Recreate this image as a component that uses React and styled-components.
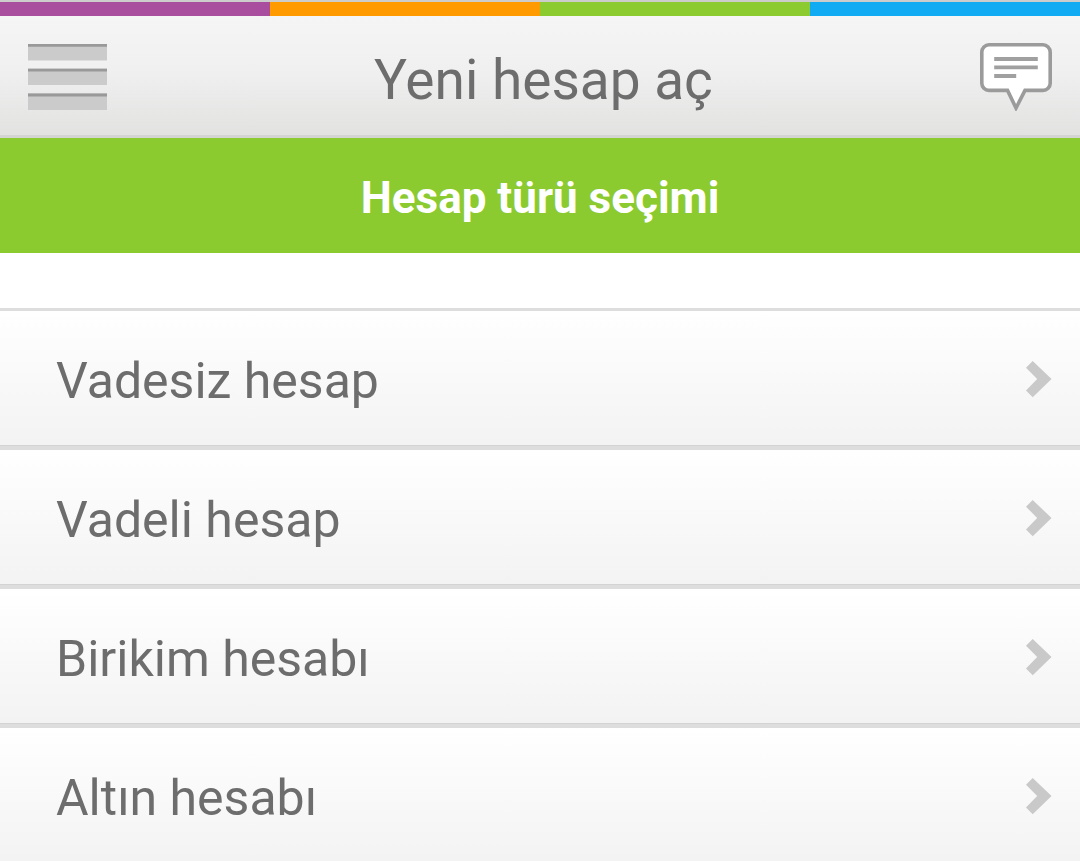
import React from "react"
import styled, { createGlobalStyle } from "styled-components"

const colors = {
  purple: "#a94d9f",
  orange: "#ff9a00",
  green: "#8ccb30",
  blue: "#10abf2",
  text: "#6d6d6d",
  line: "#dddddd",
}

const GlobalStyle = createGlobalStyle`
  body {
    margin: 0;
    background: #ffffff;
    color: ${colors.text};
    font-family: Roboto, "Liberation Sans", sans-serif;
  }
`

const Page = styled.div`
  display: flex;
  flex-direction: column;
`

const Stripes = styled.div`
  display: flex;
  height: 14px;
  border-top: 2px solid #cccccc;
`

const Stripe = styled.span`
  flex: 1;
  background: ${props => props.$color};
`

const Header = styled.header`
  display: flex;
  justify-content: space-between;
  align-items: center;
  height: 117px;
  padding: 2px 28px 0;
  background: linear-gradient(#f5f5f5, #f0f0f0 45%, #e2e2e1);
  border-bottom: 3px solid #d4d4d2;
`

const Title = styled.h1`
  margin: 0;
  padding-top: 6px;
  font-size: 55px;
  line-height: 66px;
  font-weight: 400;
`

const IconButton = styled.button`
  display: flex;
  padding: 0;
  border: 0;
  background: none;
  cursor: pointer;
`

const Banner = styled.h2`
  margin: 0;
  padding: 34px 24px 29px;
  background: ${colors.green};
  color: #ffffff;
  font-size: 44px;
  line-height: 52px;
  font-weight: 700;
  text-align: center;
`

const List = styled.ul`
  list-style: none;
  margin: 55px 0 0;
  padding: 0;
  border-top: 3px solid ${colors.line};
`

const Item = styled.li`
  border-bottom: 4px solid ${colors.line};

  &:last-child {
    border-bottom: 0;
  }
`

const ItemLink = styled.a`
  display: flex;
  justify-content: space-between;
  align-items: center;
  padding: 38px 28px 36px 56px;
  background: linear-gradient(#ffffff, #f3f3f3);
  border-bottom: 1px solid #d3d3d3;
  color: inherit;
  text-decoration: none;

  ${Item}:last-child & {
    border-bottom: 0;
    padding-bottom: 35px;
  }
`

const ItemLabel = styled.span`
  padding-top: 4px;
  font-size: 50px;
  line-height: 56px;
`

const MenuIcon = () => (
  <svg width="79" height="66" viewBox="0 0 79 66" aria-hidden="true">
    <path fill="#cbcbcb" d="M0 0h79v16.4H0zM0 24.6h79v16.4H0zM0 49.2h79V66H0z" />
    <path fill="#999999" d="M0 0h79v2.8H0zM0 24.8h79v2.8H0zM0 49.6h79v2.8H0z" />
  </svg>
)

const MessageIcon = () => (
  <svg width="72" height="68" viewBox="0 0 72 68" fill="none" aria-hidden="true">
    <path
      d="M9 1.8h54a7.2 7.2 0 0 1 7.2 7.2v31.2a7.2 7.2 0 0 1-7.2 7.2H45L36 65l-8.5-17.6H9a7.2 7.2 0 0 1-7.2-7.2V9A7.2 7.2 0 0 1 9 1.8z"
      fill="#ffffff"
      stroke="#9b9b9b"
      strokeWidth="3.6"
    />
    <path
      d="M14.2 16h43.6M14.2 24.3h43.6M14.2 33h22"
      stroke="#a0a0a0"
      strokeWidth="3.8"
    />
  </svg>
)

const Chevron = () => (
  <svg width="27" height="38" viewBox="0 0 27 38" aria-hidden="true">
    <path fill="#c9c9c9" d="M7.7 1L26.5 19 7.7 37.2 1 30.5 12.2 19 1 7.7z" />
  </svg>
)

const accounts = [
  "Vadesiz hesap",
  "Vadeli hesap",
  "Birikim hesabı",
  "Altın hesabı",
]

const App = () => (
  <Page>
    <GlobalStyle />
    <Stripes>
      <Stripe $color={colors.purple} />
      <Stripe $color={colors.orange} />
      <Stripe $color={colors.green} />
      <Stripe $color={colors.blue} />
    </Stripes>
    <Header>
      <IconButton type="button" aria-label="Menü">
        <MenuIcon />
      </IconButton>
      <Title>Yeni hesap aç</Title>
      <IconButton type="button" aria-label="Mesajlar">
        <MessageIcon />
      </IconButton>
    </Header>
    <main>
      <Banner>Hesap türü seçimi</Banner>
      <List>
        {accounts.map(name => (
          <Item key={name}>
            <ItemLink href="#">
              <ItemLabel>{name}</ItemLabel>
              <Chevron />
            </ItemLink>
          </Item>
        ))}
      </List>
    </main>
  </Page>
)

export default App
